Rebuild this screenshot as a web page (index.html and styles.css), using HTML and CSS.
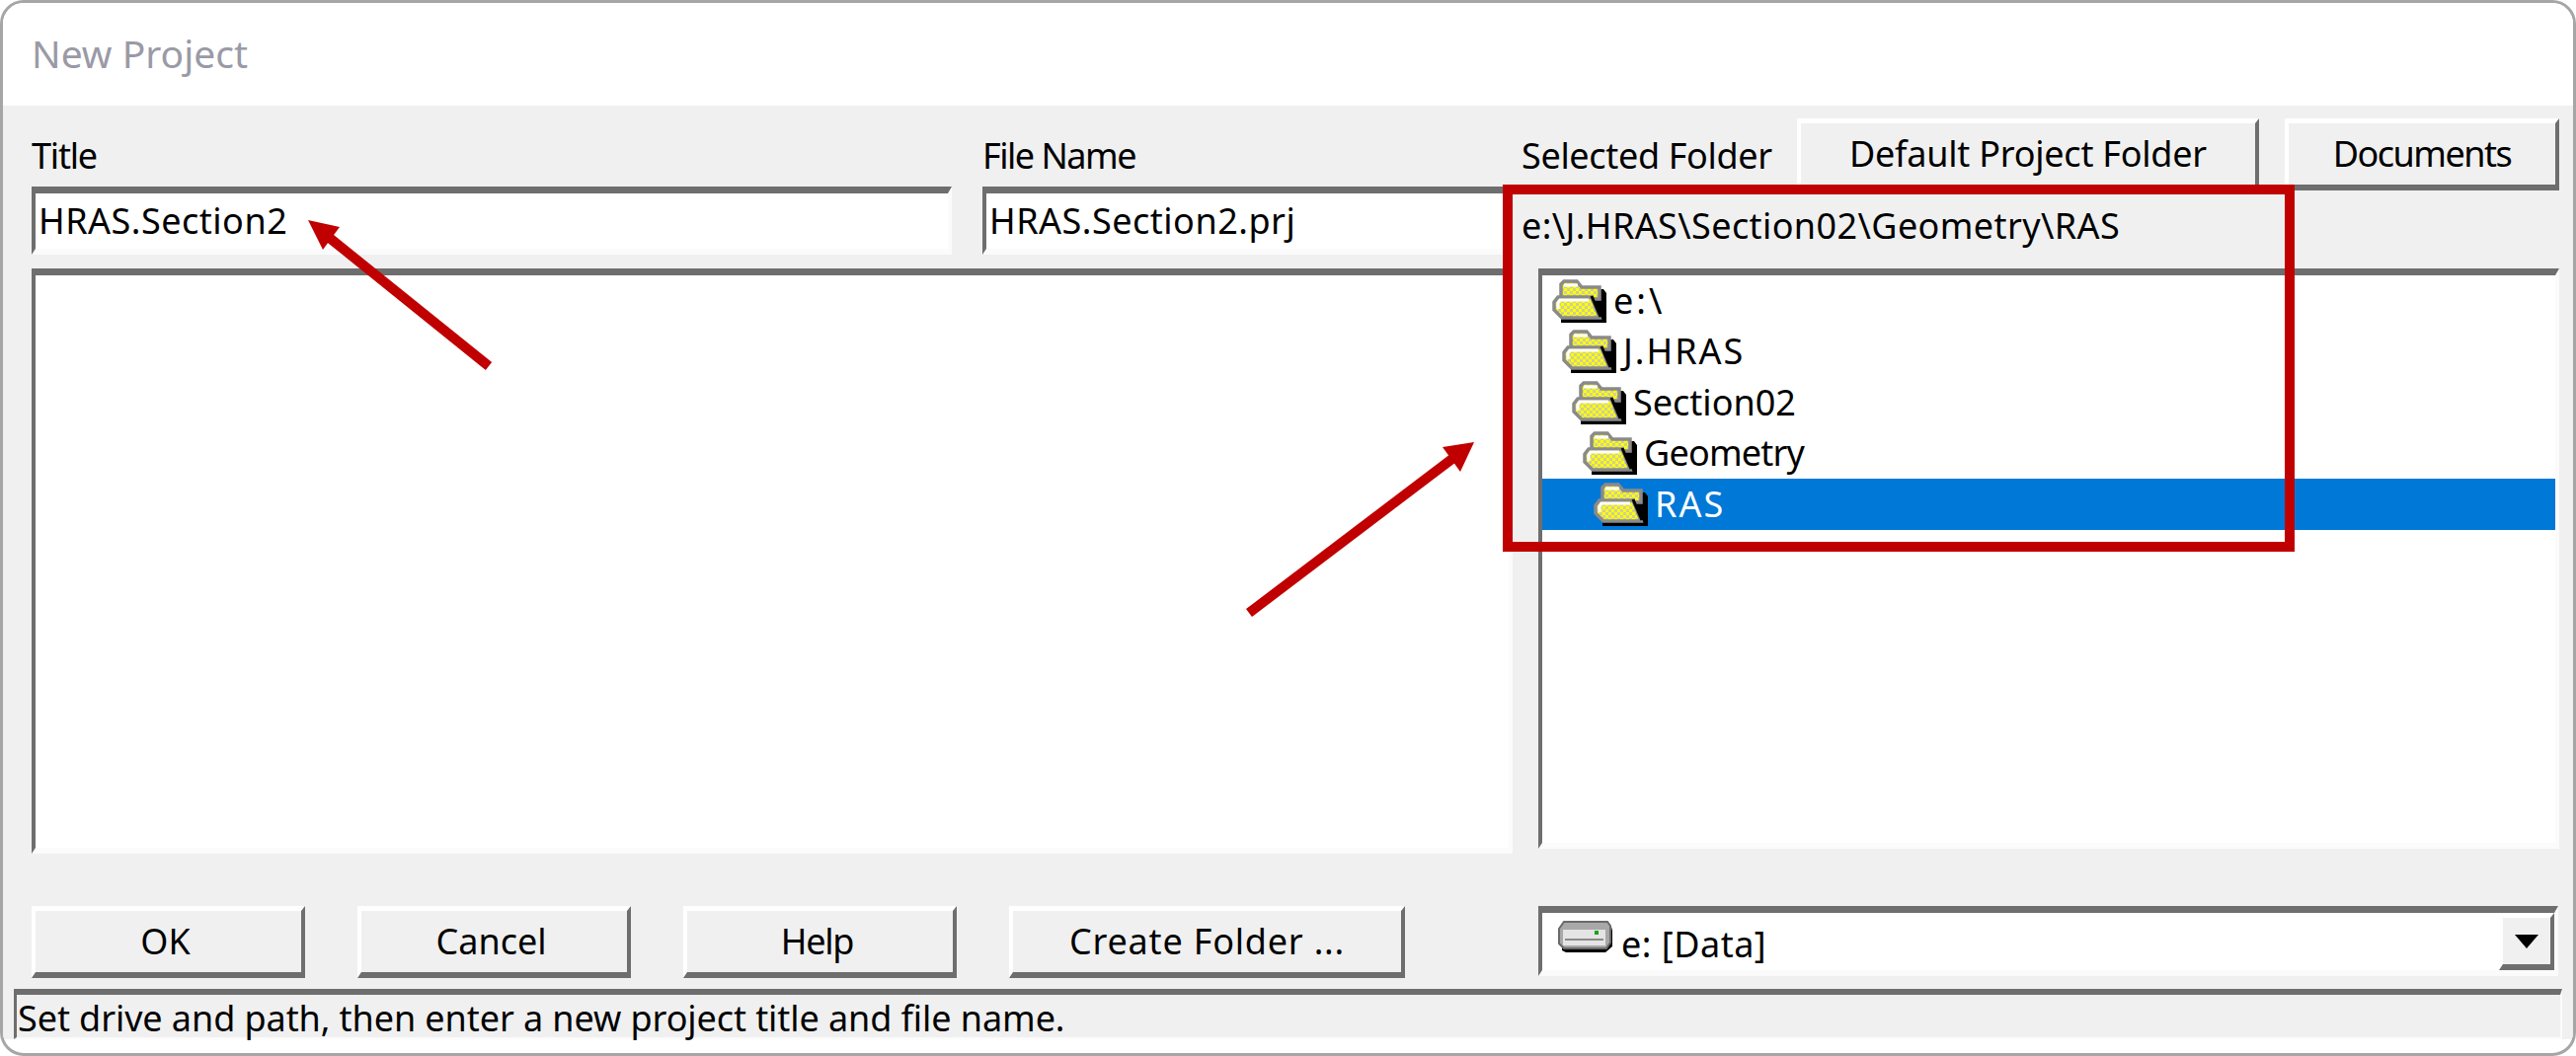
FILE: index.html
```html
<!DOCTYPE html>
<html lang="en">
<head>
<meta charset="utf-8">
<title>New Project</title>
<link rel="stylesheet" href="styles.css">
</head>
<body>
<svg class="defs" width="0" height="0" aria-hidden="true">
  <defs>
    <pattern id="dither" width="6" height="6" patternUnits="userSpaceOnUse">
      <rect width="6" height="6" fill="#ffff00"/>
      <rect width="3" height="3" fill="#cfcf98"/>
      <rect x="3" y="3" width="3" height="3" fill="#cfcf98"/>
    </pattern>
    <symbol id="folder" viewBox="0 0 55 44">
      <path d="M44 10H52L55 14V44H9V39H46L42 20Z" fill="#000"/>
      <path d="M9 18V5L12 2H25L30 8H48V20H9Z" fill="url(#dither)" stroke="#8a8a8a" stroke-width="3.5"/>
      <path d="M12 6H26" stroke="#fff" stroke-width="3"/>
      <path d="M2 23L6 18H40L48 39H10L2 31Z" fill="url(#dither)" stroke="#8a8a8a" stroke-width="3.5"/>
      <path d="M6 30V24L8 21H37" fill="none" stroke="#fff" stroke-width="3"/>
      <path d="M40 17L49 38" fill="none" stroke="#000" stroke-width="3"/>
    </symbol>
  </defs>
</svg>
<div class="window">
  <div class="titlebar">New Project</div>
  <div class="body">
    <div class="main">
      <div class="left">
        <div class="fields">
          <div class="field">
            <div class="label ls-title">Title</div>
            <div class="sunken input ls-value">HRAS.Section2</div>
          </div>
          <div class="field">
            <div class="label ls-name">File Name</div>
            <div class="sunken input ls-value">HRAS.Section2.prj</div>
          </div>
        </div>
        <div class="sunken list"></div>
      </div>
      <div class="right">
        <div class="folder-head">
          <div class="label folder-label">Selected Folder</div>
          <div class="raised btn btn-default">Default Project Folder</div>
          <div class="raised btn btn-docs">Documents</div>
        </div>
        <div class="path">e:\J.HRAS\Section02\Geometry\RAS</div>
        <div class="sunken tree">
          <div class="tree-row lvl0"><svg class="folder"><use href="#folder"/></svg><span class="ls-drive">e:\</span></div>
          <div class="tree-row lvl1"><svg class="folder"><use href="#folder"/></svg><span class="ls-caps">J.HRAS</span></div>
          <div class="tree-row lvl2"><svg class="folder"><use href="#folder"/></svg><span>Section02</span></div>
          <div class="tree-row lvl3"><svg class="folder"><use href="#folder"/></svg><span class="ls-geo">Geometry</span></div>
          <div class="tree-row lvl4 selected"><svg class="folder"><use href="#folder"/></svg><span class="ls-caps">RAS</span></div>
        </div>
      </div>
    </div>
    <div class="actions">
      <div class="raised btn btn-action">OK</div>
      <div class="raised btn btn-action">Cancel</div>
      <div class="raised btn btn-action ls-title">Help</div>
      <div class="raised btn btn-create">Create Folder ...</div>
      <div class="sunken combo">
        <svg class="drive" viewBox="0 0 55 32">
          <path d="M4 26V30L8 32H48L55 26V6L50 26Z" fill="#000"/>
          <path d="M1 8L6 1H50L53 5V22L49 28H6L1 23Z" fill="#a8a8a8" stroke="#6a6a6a" stroke-width="2"/>
          <path d="M5 9H48V25H5Z" fill="#e4e4e4"/>
          <path d="M7 19H46" stroke="#8a8a8a" stroke-width="2"/>
          <rect x="37" y="10" width="4" height="4" fill="#1aa01a"/>
        </svg>
        <span class="combo-text">e: [Data]</span>
        <div class="raised combo-btn"><svg class="caret" viewBox="0 0 24 14"><path d="M0 0H24L12 14Z" fill="#000"/></svg></div>
      </div>
    </div>
    <div class="status">Set drive and path, then enter a new project title and file name.</div>
  </div>
</div>
<svg class="annotations" viewBox="0 0 2609 1070" width="2609" height="1070" aria-hidden="true">
  <rect class="red-box" x="1527" y="192" width="792" height="362"/>
  <path class="arrow-line" d="M495 371L325 234"/>
  <path class="arrow-head" d="M312 223L344 230L327 253Z"/>
  <path class="arrow-line" d="M1265 621L1472 464"/>
  <path class="arrow-head" d="M1493 448L1461 453L1479 478Z"/>
</svg>
</body>
</html>
```
FILE: styles.css
```css
* { box-sizing: border-box; }
html, body { margin: 0; padding: 0; background: #fff; }
body {
  position: relative;
  width: 2609px;
  height: 1070px;
  overflow: hidden;
  font-family: "Noto Sans", "Liberation Sans", sans-serif;
  font-size: 36px;
  color: #000;
}
.defs { position: absolute; }
.window {
  width: 2609px;
  height: 1070px;
  border: 3px solid #a6a6a6;
  border-radius: 24px;
  overflow: hidden;
  display: flex;
  flex-direction: column;
  background: #fff;
}
.titlebar {
  height: 104px;
  flex: none;
  padding: 27px 0 0 29px;
  font-size: 39px;
  line-height: 48px;
  color: #9a9aa6;
  background: #fff;
}
.body {
  flex: 1;
  margin-bottom: 14px;
  background: #f0f0f0;
  display: flex;
  flex-direction: column;
  padding-top: 13px;
}
.main { display: flex; height: 745px; padding-left: 29px; flex: none; }
.left { width: 1500px; flex: none; padding-top: 17px; }
.fields { display: flex; gap: 31px; }
.field:first-child { width: 932px; }
.field:last-child { flex: 1; }
.label { height: 52px; line-height: 42px; white-space: nowrap; }
.ls-title { letter-spacing: -1.2px; }
.ls-name { letter-spacing: -1.5px; }
.ls-value { letter-spacing: 0.5px; }
.ls-drive { letter-spacing: 3px; }
.ls-caps { letter-spacing: 2px; }
.ls-geo { letter-spacing: -0.8px; }
.sunken {
  background: #fff;
  border-style: solid;
  border-color: #6e6e6e #fbfbfb #fbfbfb #6e6e6e;
  border-width: 7px 4px 6px 4px;
}
.raised {
  background: #f0f0f0;
  border-style: solid;
  border-color: #fff #6e6e6e #6e6e6e #fff;
  border-width: 5px 4px 6px 4px;
}
.input {
  height: 69px;
  padding-left: 3px;
  line-height: 56px;
  white-space: nowrap;
}
.list { height: 593px; margin-top: 14px; }
.right { flex: 1; padding-left: 9px; padding-right: 14px; display: flex; flex-direction: column; }
.folder-head { display: flex; height: 73px; }
.folder-label { width: 279px; margin-top: 17px; flex: none; letter-spacing: -0.33px; }
.btn {
  display: flex;
  align-items: center;
  justify-content: center;
  white-space: nowrap;
  padding-bottom: 2px;
}
.btn-default { width: 468px; letter-spacing: -0.23px; }
.btn-docs { width: 278px; margin-left: 26px; letter-spacing: -1.5px; }
.path { height: 79px; line-height: 72px; white-space: nowrap; letter-spacing: 0.4px; }
.tree {
  margin-left: 17px;
  height: 588px;
  display: grid;
  grid-auto-rows: 51.5px;
  align-content: start;
}
.tree-row { display: flex; align-items: center; white-space: nowrap; }
.tree-row span { margin-left: 7px; line-height: 56px; }
.folder { width: 55px; height: 44px; flex: none; }
.lvl0 { padding-left: 10px; }
.lvl1 { padding-left: 20px; }
.lvl2 { padding-left: 30px; }
.lvl3 { padding-left: 41px; }
.lvl4 { padding-left: 52px; }
.selected { background: #0078d7; color: #fff; }
.actions {
  display: flex;
  height: 73px;
  flex: none;
  margin-top: 53px;
  margin-left: 29px;
  gap: 53px;
}
.btn-action { width: 277px; padding-right: 6px; }
.btn-create { width: 401px; letter-spacing: 0.8px; }
.combo {
  width: 1033px;
  height: 71px;
  margin-left: 82px;
  display: flex;
  align-items: center;
}
.drive { width: 55px; height: 32px; flex: none; margin-left: 16px; margin-bottom: 10px; }
.combo-text { margin-left: 9px; flex: 1; padding-top: 4px; letter-spacing: 0.5px; }
.combo-btn {
  width: 56px;
  height: 58px;
  flex: none;
  display: flex;
  align-items: center;
  justify-content: center;
}
.caret { width: 24px; height: 14px; }
.status {
  height: 51px;
  flex: none;
  margin: 11px 11px 0 11px;
  border-style: solid;
  border-color: #6e6e6e #fbfbfb #fbfbfb #6e6e6e;
  border-width: 6px 2px 2px 3px;
  padding-left: 1px;
  line-height: 48px;
  white-space: nowrap;
  letter-spacing: -0.08px;
}
.annotations { position: absolute; left: 0; top: 0; pointer-events: none; }
.red-box { fill: none; stroke: #c00000; stroke-width: 10; }
.arrow-line { fill: none; stroke: #c00000; stroke-width: 10; }
.arrow-head { fill: #c00000; }
```
